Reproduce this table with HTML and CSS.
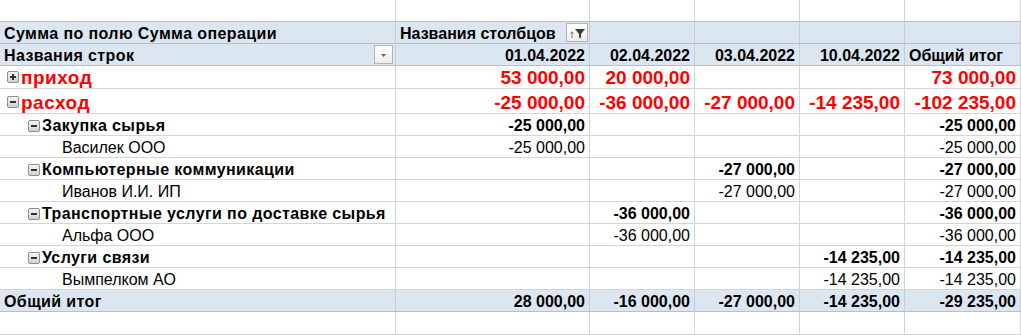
FILE: index.html
```html
<!DOCTYPE html>
<html lang="ru">
<head>
<meta charset="utf-8">
<link rel="stylesheet" href="styles.css">
</head>
<body>
<div class="sheet">
  <div class="row r22"><div class="c"></div><div class="c"></div><div class="c"></div><div class="c"></div><div class="c"></div><div class="c"></div></div>

  <div class="row r22 hdr">
    <div class="c b lab">Сумма по полю Сумма операции</div>
    <div class="c b hasbtn">Названия столбцов
      <span class="btn colbtn"><svg width="20" height="18" viewBox="0 0 20 18"><path d="M5 14V8M3.5 9.5L5 7.8 6.5 9.5" stroke="#7a7a7a" stroke-width="1" fill="none"/><path d="M8 5h10l-4 5v4.5l-2-1.2V10z" fill="#3a3a3a"/></svg></span>
    </div>
    <div class="c"></div><div class="c"></div><div class="c"></div><div class="c"></div>
  </div>

  <div class="row r22 hdr hdr2">
    <div class="c b lab hasbtn">Названия строк
      <span class="btn rowbtn"><svg width="18" height="18" viewBox="0 0 18 18"><path d="M6 8h6l-3 3z" fill="#6d6d6d"/></svg></span>
    </div>
    <div class="c b num">01.04.2022</div>
    <div class="c b num">02.04.2022</div>
    <div class="c b num">03.04.2022</div>
    <div class="c b num">10.04.2022</div>
    <div class="c b">Общий итог</div>
  </div>

  <div class="row r23 red">
    <div class="c lvl0 lab"><span class="tg plus"></span>приход</div>
    <div class="c num">53 000,00</div>
    <div class="c num">20 000,00</div>
    <div class="c num"></div>
    <div class="c num"></div>
    <div class="c num">73 000,00</div>
  </div>

  <div class="row r25 red">
    <div class="c lvl0 lab"><span class="tg"></span>расход</div>
    <div class="c num">-25 000,00</div>
    <div class="c num">-36 000,00</div>
    <div class="c num">-27 000,00</div>
    <div class="c num">-14 235,00</div>
    <div class="c num">-102 235,00</div>
  </div>

  <div class="row r22 b">
    <div class="c lvl1 lab"><span class="tg"></span>Закупка сырья</div>
    <div class="c num">-25 000,00</div>
    <div class="c num"></div><div class="c num"></div><div class="c num"></div>
    <div class="c num">-25 000,00</div>
  </div>
  <div class="row r22">
    <div class="c lvl2">Василек ООО</div>
    <div class="c num">-25 000,00</div>
    <div class="c num"></div><div class="c num"></div><div class="c num"></div>
    <div class="c num">-25 000,00</div>
  </div>

  <div class="row r22 b">
    <div class="c lvl1 lab"><span class="tg"></span>Компьютерные коммуникации</div>
    <div class="c num"></div><div class="c num"></div>
    <div class="c num">-27 000,00</div>
    <div class="c num"></div>
    <div class="c num">-27 000,00</div>
  </div>
  <div class="row r22">
    <div class="c lvl2">Иванов И.И. ИП</div>
    <div class="c num"></div><div class="c num"></div>
    <div class="c num">-27 000,00</div>
    <div class="c num"></div>
    <div class="c num">-27 000,00</div>
  </div>

  <div class="row r22 b">
    <div class="c lvl1 lab"><span class="tg"></span>Транспортные услуги по доставке сырья</div>
    <div class="c num"></div>
    <div class="c num">-36 000,00</div>
    <div class="c num"></div><div class="c num"></div>
    <div class="c num">-36 000,00</div>
  </div>
  <div class="row r22">
    <div class="c lvl2">Альфа ООО</div>
    <div class="c num"></div>
    <div class="c num">-36 000,00</div>
    <div class="c num"></div><div class="c num"></div>
    <div class="c num">-36 000,00</div>
  </div>

  <div class="row r22 b">
    <div class="c lvl1 lab"><span class="tg"></span>Услуги связи</div>
    <div class="c num"></div><div class="c num"></div><div class="c num"></div>
    <div class="c num">-14 235,00</div>
    <div class="c num">-14 235,00</div>
  </div>
  <div class="row r22">
    <div class="c lvl2">Вымпелком АО</div>
    <div class="c num"></div><div class="c num"></div><div class="c num"></div>
    <div class="c num">-14 235,00</div>
    <div class="c num">-14 235,00</div>
  </div>

  <div class="row r22 b total">
    <div class="c lab">Общий итог</div>
    <div class="c num">28 000,00</div>
    <div class="c num">-16 000,00</div>
    <div class="c num">-27 000,00</div>
    <div class="c num">-14 235,00</div>
    <div class="c num">-29 235,00</div>
  </div>

  <div class="row r23 last"><div class="c"></div><div class="c"></div><div class="c"></div><div class="c"></div><div class="c"></div><div class="c"></div></div>
</div>
</body>
</html>
```

FILE: styles.css
```css
html, body {
  margin: 0;
  padding: 0;
  background: #fff;
}
body {
  font-family: "Liberation Sans", Arial, sans-serif;
  font-size: 16px;
  color: #000;
  width: 1021px;
  height: 335px;
  overflow: hidden;
}
.sheet {
  display: flex;
  flex-direction: column;
  width: 1021px;
}
.row {
  display: grid;
  grid-template-columns: 396px 194px 105px 105px 105px 116px;
}
.r22 { height: 22px; }
.r23 { height: 23px; }
.r25 { height: 25px; }

.c {
  box-sizing: border-box;
  border-right: 1px solid #d4d4d4;
  border-bottom: 1px solid #d4d4d4;
  padding: 0 4px 1px 4px;
  display: flex;
  align-items: flex-end;
  white-space: nowrap;
  line-height: 16px;
  position: relative;
}
.b { font-weight: bold; }
.num { justify-content: flex-end; }
.b .lab, .lab.b { letter-spacing: 0.4px; }
.red .lab { letter-spacing: 0.5px; }

.hdr .c {
  background: #dce6f1;
  border-bottom-color: #b9bfc6;
  border-right-color: #c9cdd2;
}
.row:first-child .c { border-bottom-color: #b9bfc6; }

.total .c {
  background: #dce6f1;
  border-bottom-color: #b9bfc6;
  border-right-color: #c9cdd2;
}

.red .c {
  color: #ff0000;
  font-weight: bold;
  font-size: 19px;
  line-height: 19px;
}

.lvl0 { padding-left: 7px; }
.lvl1 { padding-left: 28px; }
.lvl2 { padding-left: 62px; }

.tg {
  box-sizing: border-box;
  width: 12px;
  height: 12px;
  border: 1px solid #8e8e8e;
  border-radius: 2px;
  background: linear-gradient(#f4f4f4, #d2d2d2);
  margin-right: 2px;
  margin-bottom: 2px;
  align-self: flex-end;
  position: relative;
  flex: none;
}
.tg::before {
  content: "";
  position: absolute;
  left: 2px;
  top: 4px;
  width: 6px;
  height: 2px;
  background: #333;
}
.tg.plus::after {
  content: "";
  position: absolute;
  left: 4px;
  top: 2px;
  width: 2px;
  height: 6px;
  background: #333;
}
.red .tg { margin-bottom: 4px; }

.hasbtn { padding-right: 2px; }
.btn {
  position: absolute;
  box-sizing: border-box;
  border: 1px solid #b5b5b5;
  background: linear-gradient(#ffffff, #ececec);
  display: flex;
  align-items: center;
  justify-content: center;
}
.colbtn {
  left: 170px;
  top: 1px;
  width: 22px;
  height: 19px;
}
.rowbtn {
  right: 2px;
  top: 1px;
  width: 19px;
  height: 19px;
}
```
